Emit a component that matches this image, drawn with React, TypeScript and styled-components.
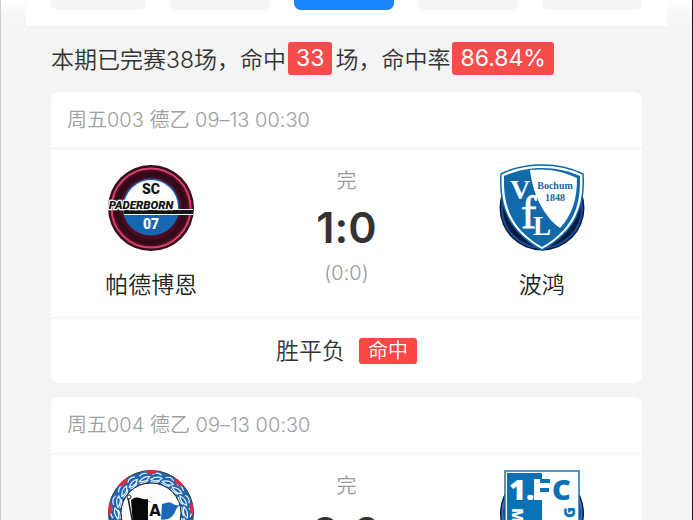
import React from "react";
import styled, { createGlobalStyle } from "styled-components";

const GlobalStyle = createGlobalStyle`
  * { box-sizing: border-box; }
  body {
    margin: 0;
    overflow: hidden;
    background: #f5f5f5;
    color: #333;
    font-family: Inter, "Noto Sans CJK SC", sans-serif;
    font-weight: 350;
    font-feature-settings: "calt" 0;
  }
`;

const Page = styled.div`
  height: 100vh;
  overflow: hidden;
  padding: 0 25px;
  border-left: 1px solid #cdcdcd;
  border-right: 1px solid #161616;
  background: linear-gradient(#fff, #f5f5f5 20px);
`;

const Screen = styled.main`
  background: #f4f4f4;
`;

const Tabs = styled.nav`
  display: grid;
  grid-template-columns: 95fr repeat(4, 100fr);
  gap: 24px;
  padding: 0 25px 16px;
  background: #fff;
`;

const Tab = styled.button<{ $active?: boolean }>`
  height: 10px;
  padding: 0;
  border: 0;
  border-radius: 0 0 7px 7px;
  background: ${(p) => (p.$active ? "#1985fc" : "#f5f5f5")};
`;

const Summary = styled.p`
  display: flex;
  align-items: center;
  height: 66px;
  margin: 0;
  padding: 0 25px 2px;
  font-size: 23px;
  white-space: nowrap;
`;

const Rate = styled.span`
  margin: 0 3px 0 2px;
  padding: 0 8px;
  border-radius: 3px;
  background: #f74c4c;
  color: #fff;
  line-height: 33px;
  font-weight: 400;
`;

const List = styled.div`
  display: flex;
  flex-direction: column;
  gap: 14px;
  padding: 0 25px 14px;
`;

const Card = styled.article`
  border-radius: 8px;
  background: #fff;
`;

const CardHeader = styled.header`
  padding: 0 16px;
  border-bottom: 1px solid #f0f0f0;
  color: #a0a0a0;
  font-size: 20px;
  line-height: 56px;
`;

const Match = styled.div`
  display: grid;
  grid-template-columns: 1fr 190px 1fr;
  padding: 15px 0 14px;
`;

const Team = styled.div`
  display: flex;
  flex-direction: column;
  align-items: center;
  gap: 15px;
  color: #222;
  font-size: 23px;
  line-height: 36px;
`;

const Crest = styled.svg`
  width: 88px;
  height: 88px;
`;

const Result = styled.div`
  display: flex;
  flex-direction: column;
  align-items: center;
  color: #999;
  font-size: 20px;
  line-height: 34px;
`;

const Score = styled.strong`
  color: #333;
  font-size: 43px;
  font-weight: 600;
  line-height: 58px;
`;

const CardFooter = styled.footer`
  display: flex;
  align-items: center;
  justify-content: center;
  gap: 14px;
  height: 66px;
  border-top: 1px solid #f0f0f0;
  font-size: 23px;
  line-height: 26px;
`;

const Hit = styled.span`
  padding: 0 9px;
  border-radius: 3px;
  background: #ff4545;
  color: #fff;
  font-size: 20px;
`;

const Paderborn = () => (
  <Crest viewBox="0 0 88 88" role="img" aria-label="SC Paderborn 07">
    <circle cx="44" cy="44" r="43" fill="#35101b" />
    <circle cx="44" cy="44" r="39.5" fill="#4c0d23" stroke="#d93f6c" strokeWidth="2" />
    <circle cx="44" cy="44" r="34" fill="none" stroke="#320a18" strokeWidth="5" />
    <circle cx="44" cy="43" r="28.5" fill="#1766b2" />
    <path d="M17 43a27 27 0 0 1 54 0v2H17z" fill="#fff" />
    <path d="M17 45h69v6H17z" fill="#fff" />
    <path d="M17 46h69v4H17z" fill="#151515" />
    <g fontFamily="Roboto" fontWeight="900" textAnchor="middle">
      <text x="44" y="30" fontSize="14" fill="#151515">SC</text>
      <text
        x="34"
        y="45"
        fontSize="11.5"
        fontStyle="italic"
        fill="#111"
        stroke="#fff"
        strokeWidth="2.5"
        paintOrder="stroke"
      >
        PADERBORN
      </text>
      <text x="44" y="65" fontSize="14" fill="#fff">07</text>
    </g>
  </Crest>
);

const Bochum = () => (
  <Crest viewBox="0 0 88 88" role="img" aria-label="VfL Bochum 1848">
    <circle cx="44" cy="44" r="42.5" fill="#071b3c" />
    <circle cx="44" cy="44" r="40" fill="none" stroke="#1d4a9c" strokeWidth="2" />
    <path
      d="M44 1c15 0 29 3 41 9 2 32-7 57-41 76C10 67 1 42 3 10 15 4 29 1 44 1z"
      fill="#fff"
      stroke="#0c68a7"
      strokeWidth="1.5"
    />
    <path d="M44 4c14 0 27 3 38 8 1 30-7 53-38 71C13 65 5 42 6 12 17 7 30 4 44 4z" fill="#1169aa" />
    <path d="M32 6c17-2 33 1 47 8 0 20-4 36-17 50C47 54 35 32 32 6z" fill="#fff" />
    <g fontFamily="Liberation Serif" fontWeight="700">
      <text x="12" y="35" fontSize="28" fill="#fff">V</text>
      <text x="23" y="64" fontSize="46" fontWeight="400" fill="#fff" stroke="#fff" strokeWidth="0.8">f</text>
      <text x="35" y="71" fontSize="27" fill="#fff">L</text>
      <text x="57" y="25" fontSize="10" textAnchor="middle" fill="#23659f">Bochum</text>
      <text x="57" y="37" fontSize="10" textAnchor="middle" fill="#23659f">1848</text>
    </g>
  </Crest>
);

const leafAngles = Array.from({ length: 18 }, (_, i) => i * 20 + 10);

const Bielefeld = () => (
  <Crest viewBox="0 0 88 88" role="img" aria-label="Arminia Bielefeld">
    <circle cx="44" cy="44" r="42.5" fill="#1d66b4" stroke="#47332f" />
    {leafAngles.map((angle) => (
      <g key={angle} transform={`rotate(${angle} 44 44)`} fill="none" stroke="#e8f1fb" strokeWidth="1.2">
        <path d="M38 11q5-5 11-3-4 5-11 3zM39 6q4-4 9-1M38 13q6 1 9-2" />
      </g>
    ))}
    {[-84, -42, 0, 42, 84].map((angle) => (
      <path key={angle} transform={`rotate(${angle} 44 44)`} d="M38 2q6-2 12 0l-2 3h-8z" fill="#d52f43" />
    ))}
    <circle cx="44" cy="44" r="30" fill="#fff" stroke="#222" />
    <path d="M21 29l8 42" stroke="#222" strokeWidth="1.5" />
    <circle cx="22" cy="28" r="2" fill="#fff" stroke="#222" />
    <path d="M24 31c8-6 10 1 17-1v27c-8 1-11-5-15-1z" fill="#080808" />
    <path d="M41 32c8 3 12 4 18 2 5-3 8 4 14 2-6 5-4 9-10 13-6 4-13-1-20 3z" fill="#1b68b7" />
    <path d="M41 33l14 1-1 17-13 1z" fill="#fff" />
    <text x="48" y="47" fontFamily="DejaVu Sans" fontWeight="700" fontSize="15" textAnchor="middle" fill="#111">A</text>
  </Crest>
);

const Magdeburg = () => (
  <Crest viewBox="0 0 88 88" role="img" aria-label="1. FC Magdeburg">
    <circle cx="44" cy="44" r="42" fill="#081a38" />
    <circle cx="44" cy="44" r="39.5" fill="none" stroke="#3a70d3" strokeWidth="2" />
    <path d="M7 2h74v54q-5 20-37 31Q12 76 7 56z" fill="#fff" stroke="#1674b5" strokeWidth="1.5" />
    <path d="M9 4h35v81Q14 74 9 56z" fill="#0872b5" />
    <g fontFamily="Open Sans" fontWeight="800" fontSize="29">
      <text x="11" y="31" fill="#fff">1.</text>
      <text x="54" y="31" fill="#0872b5">C</text>
    </g>
    <path d="M36 10h8v21h-8z" fill="#fff" />
    <path d="M42 10h10v4H42zM42 19h9v4h-9z" fill="#0872b5" />
    <g fontFamily="Open Sans" fontWeight="800" fontSize="15">
      <text transform="translate(14 39) rotate(90)" fill="#fff">M</text>
      <text transform="translate(77 49) rotate(-90)" fill="#0872b5">G</text>
    </g>
  </Crest>
);

type Fixture = {
  id: string;
  info: string;
  home: string;
  away: string;
  HomeCrest: React.FC;
  AwayCrest: React.FC;
  score: string;
  half?: string;
};

const fixtures: Fixture[] = [
  {
    id: "003",
    info: "周五003 德乙 09–13 00:30",
    home: "帕德博恩",
    away: "波鸿",
    HomeCrest: Paderborn,
    AwayCrest: Bochum,
    score: "1:0",
    half: "(0:0)",
  },
  {
    id: "004",
    info: "周五004 德乙 09–13 00:30",
    home: "",
    away: "",
    HomeCrest: Bielefeld,
    AwayCrest: Magdeburg,
    score: "2:0",
  },
];

const MatchCard = ({ info, home, away, HomeCrest, AwayCrest, score, half }: Fixture) => (
  <Card>
    <CardHeader>{info}</CardHeader>
    <Match>
      <Team>
        <HomeCrest />
        {home}
      </Team>
      <Result>
        <span>完</span>
        <Score>{score}</Score>
        {half && <span>{half}</span>}
      </Result>
      <Team>
        <AwayCrest />
        {away}
      </Team>
    </Match>
    {half && (
      <CardFooter>
        胜平负 <Hit>命中</Hit>
      </CardFooter>
    )}
  </Card>
);

export default function App() {
  return (
    <Page>
      <GlobalStyle />
      <Screen>
        <Tabs>
          {[0, 1, 2, 3, 4].map((i) => (
            <Tab key={i} type="button" $active={i === 2} />
          ))}
        </Tabs>
        <Summary>
          本期已完赛38场，命中<Rate>33</Rate>场，命中率<Rate>86.84%</Rate>
        </Summary>
        <List>
          {fixtures.map((fixture) => (
            <MatchCard key={fixture.id} {...fixture} />
          ))}
        </List>
      </Screen>
    </Page>
  );
}
